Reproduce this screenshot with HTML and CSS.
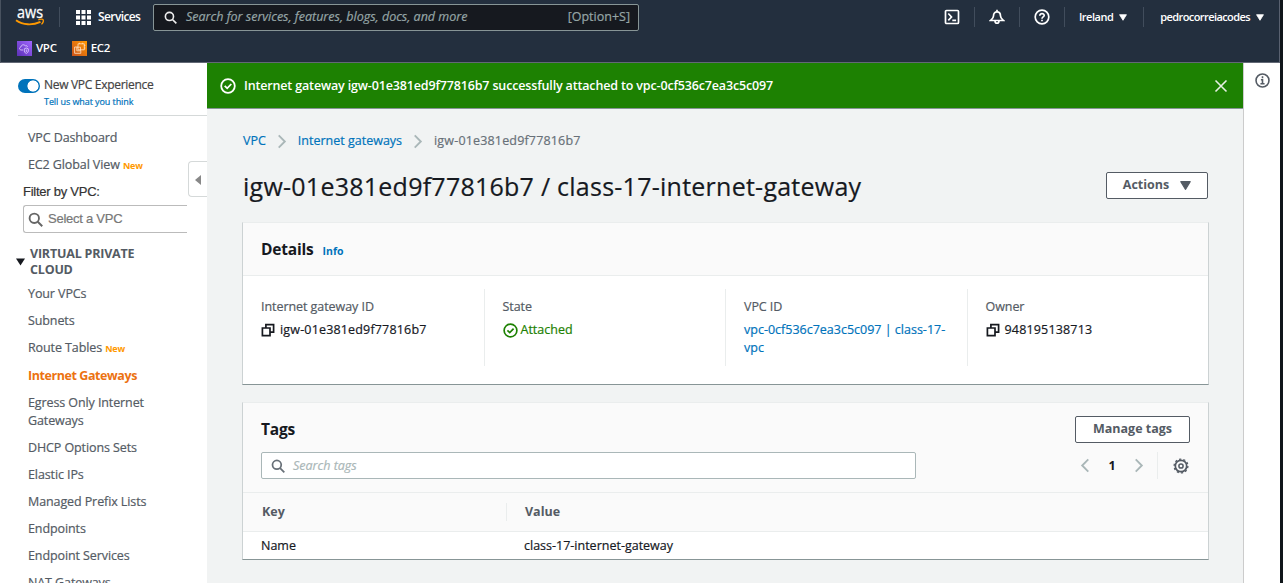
FILE: index.html
```html
<!DOCTYPE html>
<html lang="en">
<head>
<meta charset="utf-8">
<title>Internet gateway details</title>
<link rel="stylesheet" href="styles.css">
</head>
<body>
<svg class="defs" width="0" height="0">
  <symbol id="search" viewBox="0 0 16 16"><g fill="none" stroke="currentColor" stroke-width="2"><circle cx="6.7" cy="6.7" r="5"/><path d="M10.4 10.4l4.8 4.8"/></g></symbol>
  <symbol id="check" viewBox="0 0 16 16"><g fill="none" stroke="currentColor" stroke-width="1.8"><circle cx="8" cy="8" r="6.8"/><path d="M4.7 7.8l2.5 2.5 4.1-4.3"/></g></symbol>
  <symbol id="copy" viewBox="0 0 14 14"><g fill="none" stroke="currentColor" stroke-width="1.7"><path d="M1.4 5h7.600v7.600H1.4z"/><path d="M4.900 5V1.700h7.700v7.500H9"/></g></symbol>
  <symbol id="chevron" viewBox="0 0 10 16"><path d="M1.5 1.5L8 8l-6.500 6.500" fill="none" stroke="currentColor" stroke-width="2"/></symbol>
  <symbol id="down" viewBox="0 0 10 8"><path d="M.7.5h8.600L5 7.500z" fill="currentColor" stroke="currentColor" stroke-linejoin="round"/></symbol>
</svg>
<div class="app">
  <header class="topbar">
    <div class="nav-row">
      <svg class="aws" viewBox="0 0 30 26"><text class="aws-text" x="2" y="13.500" textLength="26" lengthAdjust="spacingAndGlyphs">aws</text><path d="M1 16.300c7 5 16.500 5.200 24.500 1.500" fill="none" stroke="#f90" stroke-width="1.900"/><path d="M23.300 15.800c2-.9 4.500-.8 4.900-.1.400.9-.3 3.200-1.700 4.700" fill="none" stroke="#f90" stroke-width="1.300"/></svg>
      <span class="sep sep-logo"></span>
      <svg class="grid-icon" viewBox="0 0 15 15" fill="#fff"><path d="M0 0h4v4H0zM5.500 0h4v4h-4zM11 0h4v4h-4zM0 5.500h4v4H0zM5.500 5.500h4v4h-4zM11 5.500h4v4h-4zM0 11h4v4H0zM5.500 11h4v4h-4zM11 11h4v4h-4z"/></svg>
      <span class="services">Services</span>
      <div class="global-search">
        <svg class="gs-icon"><use href="#search"/></svg>
        <span class="gs-text">Search for services, features, blogs, docs, and more</span>
        <span class="gs-key">[Option+S]</span>
      </div>
      <div class="nav-tools">
        <svg class="tool" viewBox="0 0 16 16" fill="none" stroke="#fff" stroke-width="1.700"><rect x="1.500" y="1.500" width="13" height="13" rx="1"/><path d="M4.300 4.500L7.500 8l-3.200 3.300M8.300 11.300h3.800"/></svg>
        <span class="sep"></span>
        <svg class="tool" viewBox="0 0 16 16" fill="none" stroke="#fff" stroke-width="1.700"><path d="M8 .8v2M4.500 7c0-2.600 1.300-4.200 3.500-4.200S11.500 4.400 11.500 7c0 2 1.200 3 2.900 4.500H1.600C3.300 10 4.500 9 4.500 7zM6 12c0 3 4 3 4 0"/></svg>
        <span class="sep"></span>
        <svg class="tool" viewBox="0 0 16 16" fill="none" stroke="#fff" stroke-width="1.700"><circle cx="8" cy="8" r="6.800"/><path d="M5.800 6.700C5.800 3.700 10.300 4 10.200 6.500 10.100 8 8 7.900 8 9.700M8 10.700v1.500"/></svg>
        <span class="sep"></span>
        <span class="region">Ireland</span><svg class="caret"><use href="#down"/></svg>
        <span class="sep sep-user"></span>
        <span class="user">pedrocorreiacodes</span><svg class="caret"><use href="#down"/></svg>
      </div>
    </div>
    <div class="fav-row">
      <svg class="fav-icon" viewBox="0 0 15 15"><defs><linearGradient id="violet" x1="0" y1="1" x2="1" y2="0"><stop stop-color="#5a30b5"/><stop offset="1" stop-color="#a166ff"/></linearGradient></defs><path fill="url(#violet)" d="M0 0h15v15H0z"/><path d="M6 9H4C2 8.500 2.100 6.300 4 6c.1-2.500 3.500-3 4.300-1 1-.8 2.100-.2 2.100 1M7.300 7.800l2-.8 2 .8v2.200c0 1.500-2 2.500-2 2.500s-2-1-2-2.500zM9.300 8.500v2.500" fill="none" stroke="#e4d5ff" stroke-width=".8"/></svg>
      <span class="fav-name">VPC</span>
      <svg class="fav-icon fav-ec2" viewBox="0 0 15 15"><defs><linearGradient id="amber" x1="0" y1="1" x2="1" y2="0"><stop stop-color="#c8511b"/><stop offset="1" stop-color="#f90"/></linearGradient></defs><path fill="url(#amber)" d="M0 0h15v15H0z"/><path d="M6 2.800h6.300v6H6zM5.500 6H2.600v6.300h6.200V9.500M7.500 1.800v1M10.500 1.800v1M12.300 4.500h1M12.300 7h1M8.500 6.200H4.800v3.600h3.700z" fill="none" stroke="#ffe3c6" stroke-width=".8"/></svg>
      <span class="fav-name">EC2</span>
    </div>
  </header>
  <div class="body">
    <aside class="sidebar">
      <div class="experience">
        <span class="toggle"></span>
        <div><div class="exp-title">New VPC Experience</div><div class="exp-link">Tell us what you think</div></div>
      </div>
      <nav class="menu">
        <a>VPC Dashboard</a>
        <a>EC2 Global View <b class="new">New</b></a>
        <div class="filter-label">Filter by VPC:</div>
        <div class="vpc-select"><svg><use href="#search"/></svg><span>Select a VPC</span></div>
        <div class="group"><svg viewBox="0 0 10 8"><path d="M0 0h10L5 8z" fill="#16191f"/></svg><span>VIRTUAL PRIVATE<br>CLOUD</span></div>
        <a>Your VPCs</a>
        <a>Subnets</a>
        <a>Route Tables <b class="new">New</b></a>
        <a class="active">Internet Gateways</a>
        <a>Egress Only Internet<br>Gateways</a>
        <a>DHCP Options Sets</a>
        <a>Elastic IPs</a>
        <a>Managed Prefix Lists</a>
        <a>Endpoints</a>
        <a>Endpoint Services</a>
        <a>NAT Gateways</a>
      </nav>
      <div class="collapse"><svg viewBox="0 0 6 10"><path d="M6 0v10L0 5z" fill="#888"/></svg></div>
    </aside>
    <section class="center">
      <div class="flash">
        <svg class="flash-icon"><use href="#check"/></svg>
        <span class="flash-text">Internet gateway igw-01e381ed9f77816b7 successfully attached to vpc-0cf536c7ea3c5c097</span>
        <svg class="close" viewBox="0 0 14 14"><path d="M1.500 1.500l11 11M12.500 1.500l-11 11" stroke="#e6f0e4" stroke-width="1.600"/></svg>
      </div>
      <main class="content">
        <div class="crumbs"><a>VPC</a><svg><use href="#chevron"/></svg><a>Internet gateways</a><svg><use href="#chevron"/></svg><span class="ident">igw-01e381ed9f77816b7</span></div>
        <div class="title-row">
          <h1>igw-01e381ed9f77816b7 / class-17-internet-gateway</h1>
          <div class="btn btn-actions"><span>Actions</span><svg><use href="#down"/></svg></div>
        </div>
        <section class="card">
          <div class="card-head"><h2>Details</h2><span class="info-link">Info</span></div>
          <div class="cols">
            <div class="col"><div class="label">Internet gateway ID</div><div class="value"><svg class="copy"><use href="#copy"/></svg><span class="ident">igw-01e381ed9f77816b7</span></div></div>
            <div class="col"><div class="label">State</div><div class="value ok"><svg class="ok-icon"><use href="#check"/></svg><span>Attached</span></div></div>
            <div class="col"><div class="label">VPC ID</div><div class="value link">vpc-0cf536c7ea3c5c097 | class-17-<br>vpc</div></div>
            <div class="col"><div class="label">Owner</div><div class="value"><svg class="copy"><use href="#copy"/></svg><span class="ident">948195138713</span></div></div>
          </div>
        </section>
        <section class="card tags">
          <div class="tags-head">
            <div class="tags-top"><h2>Tags</h2><div class="btn btn-tags">Manage tags</div></div>
            <div class="tags-tools">
              <div class="tag-search"><svg><use href="#search"/></svg><span>Search tags</span></div>
              <div class="pager"><svg class="prev"><use href="#chevron"/></svg><b>1</b><svg><use href="#chevron"/></svg></div>
              <svg class="gear" viewBox="0 0 16 16" fill="none" stroke="#545b64"><circle cx="8" cy="8" r="5.700" stroke-width="1.700"/><circle cx="8" cy="8" r="6.900" stroke-width="1.300" stroke-dasharray="2.200 2.135"/><circle cx="8" cy="8" r="2.100" stroke-width="1.500"/></svg>
            </div>
          </div>
          <div class="row thead"><span class="cell-key">Key</span><span class="cell-val">Value</span></div>
          <div class="row tbody"><span class="cell-key">Name</span><span class="cell-val">class-17-internet-gateway</span></div>
        </section>
      </main>
    </section>
    <aside class="help"><svg viewBox="0 0 16 16" fill="none" stroke="#545b64" stroke-width="1.700"><circle cx="8" cy="8" r="6.900"/><path d="M8 3.500v2M6.300 7.200H8v4M5.800 11.500h4.400"/></svg></aside>
  </div>
</div>
</body>
</html>
```
FILE: styles.css
```css
* { box-sizing: border-box; }
body { margin: 0; background: #10161a; font: 12.5px/18px "Open Sans", "Noto Sans", sans-serif; color: #16191f; white-space: nowrap; overflow: hidden; -webkit-text-stroke: .2px; }
h1, h2 { margin: 0; }
b, h2, .btn, .thead, .group, .active, .topbar, .flash { -webkit-text-stroke: 0; }
svg { display: block; flex: none; }
.defs { position: absolute; }
.app { width: 1280px; height: 583px; display: flex; flex-direction: column; overflow: hidden; }
.topbar { height: 63px; flex: none; background: #232f3e; border-bottom: 1px solid #626875; border-left: 1px solid #48525f; border-right: 1px solid #596170; color: #fff; font-weight: 600; }
.nav-row { height: 34px; display: flex; align-items: center; padding-left: 14px; }
.nav-row > * { flex: none; }
.aws { width: 30px; height: 26px; }
.aws-text { font: 400 17px/20px "Open Sans", sans-serif; fill: #fff; stroke: #fff; stroke-width: .3px; }
.sep { width: 1px; height: 20px; background: #414d5c; }
.sep-logo { margin: 0 16px 0 14px; }
.grid-icon { width: 15px; height: 15px; }
.services { width: 56px; margin-left: 6px; font-size: 12px; letter-spacing: -.6px; padding-left: 1px; }
.global-search { width: 486px; height: 27px; display: flex; align-items: center; border: 1px solid #879596; border-radius: 2px; background: #16191f; padding: 0 8px 0 10px; color: #95a5a6; font-weight: 400; -webkit-text-stroke: .2px; }
.gs-icon { width: 13px; height: 13px; color: #eee; }
.gs-text { margin-left: 9px; font-style: italic; }
.gs-key { margin-left: auto; }
.nav-tools { display: flex; align-items: center; margin-left: 291px; font-size: 11px; }
.tool { width: 16px; height: 16px; margin: 0 14px; }
.region { margin-left: 14px; letter-spacing: -.5px; }
.user { letter-spacing: -.58px; }
.caret { width: 8px; height: 7px; margin-left: 6px; }
.sep-user { margin: 0 16px; }
.fav-row { height: 28px; display: flex; align-items: center; padding-left: 16px; font-size: 11.5px; }
.fav-icon { width: 15px; height: 15px; margin-right: 4px; }
.fav-ec2 { margin-left: 15px; }
.fav-name { letter-spacing: -.3px; }
.body { flex: 1; display: flex; min-height: 0; }
.sidebar { position: relative; width: 207px; flex: none; background: #fff; color: #545b64; overflow: hidden; }
.experience { height: 53px; margin-left: 18px; display: flex; border-bottom: 1px solid #d5d9d9; padding-top: 13px; }
.toggle { width: 22px; height: 14px; margin: 3px 4px 0 0; border-radius: 7px; background: radial-gradient(circle at 15px 7px, #fff 5.200px, #0073bb 5.900px); }
.exp-title { color: #444; font-size: 12px; letter-spacing: -.3px; line-height: 18px; }
.exp-link { color: #0073bb; font-size: 9px; letter-spacing: -.08px; line-height: 15px; }
.menu { padding: 13px 0 0 28px; }
.menu a { display: block; margin-bottom: 9px; letter-spacing: -.1px; }
.new { color: #ff9900; font-size: 9px; letter-spacing: -.2px; }
.filter-label { margin: -1px 0 4px -5px; font: 13px/18px "Liberation Sans", Arial, sans-serif; letter-spacing: -.25px; color: #333; }
.vpc-select { width: 164px; height: 28px; margin-left: -5px; display: flex; align-items: center; border: 1px solid #bbb; border-right: 0; border-radius: 3px 0 0 3px; padding-left: 4px; font: 13px/18px "Liberation Sans", Arial, sans-serif; letter-spacing: -.25px; color: #777; }
.vpc-select svg { width: 15px; height: 15px; margin-right: 5px; color: #666; }
.group { display: flex; align-items: center; margin: 13px 0 7px -12px; font-weight: 700; letter-spacing: -.2px; line-height: 16px; }
.group svg { width: 9px; height: 8px; margin-right: 5px; }
.menu .active { color: #ec7211; font-weight: 700; letter-spacing: -.42px; }
.collapse { position: absolute; right: 0; top: 98px; width: 19px; height: 36px; border: 1px solid #d5d9d9; border-right: 0; border-radius: 4px 0 0 4px; background: #fff; padding: 13px 0 0 6px; }
.collapse svg { width: 6px; height: 10px; }
.center { width: 1036px; flex: none; background: #f1f3f3; }
.flash { height: 46px; background: #1d8102; border-bottom: 1px solid #879596; display: flex; align-items: center; color: #fff; font-weight: 600; padding: 0 15px 0 13px; }
.flash-text { letter-spacing: -.155px; }
.flash-icon { width: 16px; height: 16px; margin-right: 8px; }
.close { width: 14px; height: 14px; margin-left: auto; }
.content { padding: 23px 35px 0 35px; }
.crumbs { display: flex; align-items: center; height: 18px; padding-left: 1px; color: #687078; }
.crumbs a { color: #0073bb; }
.crumbs svg { width: 10px; height: 15px; margin: 0 11px; color: #aab7b8; }
.ident { letter-spacing: .17px; }
.title-row { display: flex; align-items: center; justify-content: space-between; height: 36px; margin: 18px 0; padding-left: 1px; }
h1 { font-size: 25px; font-weight: 400; line-height: 36px; letter-spacing: .25px; }
.btn { height: 27px; border: 1px solid #545b64; border-radius: 2px; background: #fff; color: #545b64; font-weight: 700; display: flex; align-items: center; justify-content: center; }
.btn-actions { width: 102px; margin-top: -2px; }
.btn-actions svg { width: 11px; height: 9px; margin-left: 11px; }
.btn-tags { width: 115px; line-height: 16px; padding-bottom: 1px; }
.card { width: 967px; border: 1px solid #ccd2d3; border-top-color: #eaeded; border-bottom-color: #879596; background: #fff; }
.card-head { height: 53px; background: #fafafa; border-bottom: 1px solid #eaeded; padding: 0 18px; display: flex; align-items: center; }
h2 { font-size: 15.5px; line-height: 24px; letter-spacing: -.2px; }
.info-link { margin: 4px 0 0 9px; color: #0073bb; font-size: 10.500px; font-weight: 700; -webkit-text-stroke: 0; }
.cols { height: 108px; padding: 13px 0 18px; display: grid; grid-template-columns: repeat(4, 241.500px); }
.col { padding: 9px 0 0 18px; border-right: 1px solid #eaeded; }
.col:last-child { border: 0; }
.label { color: #545b64; margin-bottom: 5px; letter-spacing: -.06px; }
.value { display: flex; align-items: center; }
.copy { width: 14px; height: 14px; margin-right: 5px; }
.ok { color: #1d8102; }
.ok-icon { width: 15px; height: 15px; margin-right: 3px; }
.link { display: block; color: #0073bb; }
.tags { margin-top: 17px; }
.tags-head { height: 90px; padding: 13px 18px 0; background: #fafafa; border-bottom: 1px solid #eaeded; }
.tags-top { display: flex; align-items: center; justify-content: space-between; }
.tags-top h2 { margin-top: -2px; }
.tags-tools { display: flex; align-items: center; margin-top: 9px; }
.tag-search { width: 655px; height: 27px; display: flex; align-items: center; border: 1px solid #aab7b8; border-radius: 2px; background: #fff; padding-left: 9px; font-style: italic; color: #aab7b8; }
.tag-search svg { width: 14px; height: 14px; color: #687078; margin-right: 8px; }
.pager { display: flex; align-items: center; justify-content: space-between; width: 242px; height: 27px; padding: 0 13px 0 164px; border-right: 1px solid #eaeded; }
.pager svg { width: 10px; height: 15px; color: #aab7b8; }
.pager .prev { transform: scaleX(-1); }
.gear { width: 16px; height: 16px; margin-left: 15px; }
.row { display: flex; align-items: center; padding-left: 18px; }
.cell-key { width: 246px; }
.cell-val { padding-left: 17px; }
.thead { height: 39px; background: #fafafa; border-bottom: 1px solid #eaeded; font-weight: 700; color: #545b64; }
.thead .cell-key { border-right: 1px solid #eaeded; padding-left: 1px; }
.thead .cell-val { padding-left: 18px; }
.tbody { height: 27px; }
.help { width: 37px; background: #fff; border-left: 1px solid #ccc; padding: 10px 0 0 11px; }
.help svg { width: 15px; height: 15px; }
```
